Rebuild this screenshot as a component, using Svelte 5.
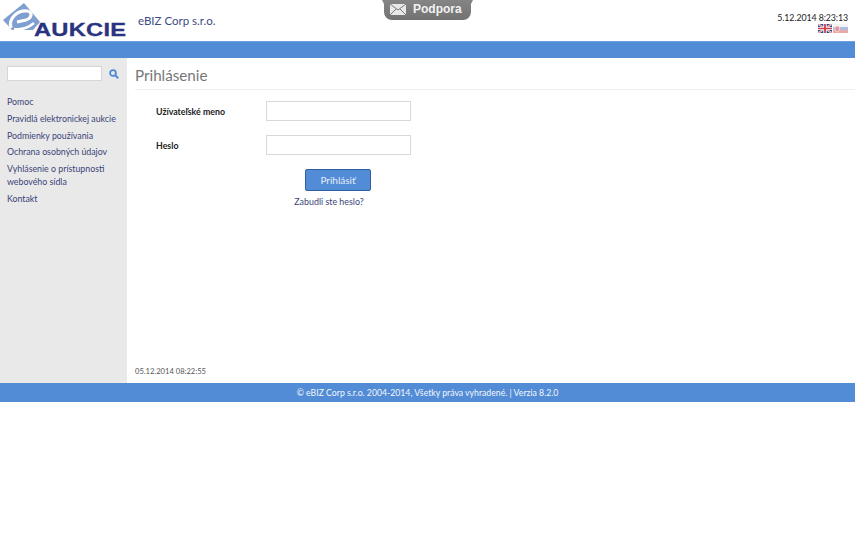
<script>
  const links = [
    'Pomoc',
    'Pravidlá elektronickej aukcie',
    'Podmienky používania',
    'Ochrana osobných údajov',
    'Vyhlásenie o prístupnosti webového sídla',
    'Kontakt'
  ];
</script>

<div class="page">
  <header class="top">
    <div class="logo">
      <svg class="mark" width="48" height="38" viewBox="0 0 48 38">
        <path d="M23 2 L39 21 L32 29 L11 29 L2 19 Z" fill="#7f9fd0" />
        <path d="M10 27 C7 17 17 9 26 10 C32 11 31 17 25 19 L16 21" fill="none" stroke="#fff" stroke-width="3.2" />
        <path d="M13 28 C20 29 27 27 33 22" fill="none" stroke="#fff" stroke-width="2.6" />
      </svg>
      <span class="logotext">AUKCIE</span>
    </div>
    <div class="corp">eBIZ Corp s.r.o.</div>
    <div class="support">
      <svg width="16" height="11" viewBox="0 0 16 11">
        <rect width="16" height="11" fill="#e8e8e8" />
        <path d="M0 0 L8 6 L16 0 M0 11 L6 5 M16 11 L10 5" fill="none" stroke="#7a7a7a" stroke-width="1" />
      </svg>
      <span>Podpora</span>
    </div>
    <div class="meta">
      <div class="clock">5.12.2014 8:23:13</div>
      <div class="flags">
        <svg width="14" height="9" viewBox="0 0 14 10" preserveAspectRatio="none">
          <rect width="14" height="10" fill="#2b4a8c" />
          <path d="M0 0 L14 10 M14 0 L0 10" stroke="#fff" stroke-width="2" />
          <path d="M0 0 L14 10 M14 0 L0 10" stroke="#c8404a" stroke-width="0.7" />
          <path d="M7 0 V10 M0 5 H14" stroke="#fff" stroke-width="3.4" />
          <path d="M7 0 V10 M0 5 H14" stroke="#c8404a" stroke-width="1.8" />
        </svg>
        <svg class="dim" width="15" height="9" viewBox="0 0 15 10" preserveAspectRatio="none">
          <rect width="15" height="3.4" fill="#f2f2f2" />
          <rect y="3.4" width="15" height="3.3" fill="#9db3dc" />
          <rect y="6.7" width="15" height="3.3" fill="#e59a9a" />
          <path d="M2 2.5 H6.5 V6 Q6.5 8 4.2 8.8 Q2 8 2 6 Z" fill="#e08080" stroke="#fff" stroke-width="0.6" />
        </svg>
      </div>
    </div>
  </header>

  <div class="bar"></div>

  <div class="body">
    <aside class="side">
      <div class="search">
        <input class="searchbox" type="text" />
        <svg width="10" height="10" viewBox="0 0 10 10">
          <circle cx="4" cy="4" r="2.9" fill="none" stroke="#4f8ad6" stroke-width="1.8" />
          <path d="M6.2 6.2 L9.2 9.2" stroke="#4f8ad6" stroke-width="2" />
        </svg>
      </div>
      <nav class="nav">
        {#each links as link}
          <a href="#top">{link}</a>
        {/each}
      </nav>
    </aside>

    <main class="main">
      <h1>Prihlásenie</h1>
      <form class="form">
        <div class="row">
          <label for="user">Užívateľské meno</label>
          <input id="user" type="text" />
        </div>
        <div class="row">
          <label for="pass">Heslo</label>
          <input id="pass" type="password" />
        </div>
        <div class="actions">
          <button type="button">Prihlásiť</button>
          <a href="#top">Zabudli ste heslo?</a>
        </div>
      </form>
      <div class="stamp">05.12.2014 08:22:55</div>
    </main>
  </div>

  <footer class="foot">© eBIZ Corp s.r.o. 2004-2014, Všetky práva vyhradené. | Verzia 8.2.0</footer>
</div>

<style>
  :global(body) {
    margin: 0;
    background: #fff;
  }
  .page {
    width: 855px;
    font-family: Lato, "Open Sans", sans-serif;
    font-size: 9px;
    color: #222;
  }
  .top {
    height: 41px;
    display: flex;
    position: relative;
    box-sizing: border-box;
  }
  .logo {
    width: 138px;
    height: 41px;
    position: relative;
    flex: none;
  }
  .mark {
    position: absolute;
    left: 1px;
    top: 1px;
  }
  .logotext {
    position: absolute;
    left: 34px;
    top: 20px;
    font-family: "Liberation Sans", sans-serif;
    font-weight: 700;
    font-size: 18.5px;
    line-height: 20px;
    letter-spacing: 0.2px;
    color: #2a3380;
    transform: scaleX(1.28);
    transform-origin: left;
    -webkit-text-stroke: 0.3px #2a3380;
  }
  .corp {
    font-size: 11.5px;
    color: #3e4a85;
    padding-top: 13px;
    line-height: 15px;
  }
  .support {
    position: absolute;
    left: 384px;
    top: 0;
    width: 87px;
    height: 20px;
    box-sizing: border-box;
    background: linear-gradient(#858585, #727272);
    border-radius: 0 0 8px 8px;
    display: flex;
    align-items: center;
    gap: 7px;
    padding: 0 0 2px 6px;
    color: #f2f2f2;
    font-family: "Liberation Sans", sans-serif;
    font-weight: 700;
    font-size: 12px;
  }
  .support::before,
  .support::after {
    content: "";
    position: absolute;
    top: 0;
    width: 3px;
    height: 6px;
    background: #858585;
  }
  .support::before {
    left: -2px;
    clip-path: polygon(0 0, 100% 0, 100% 100%);
  }
  .support::after {
    right: -2px;
    clip-path: polygon(0 0, 100% 0, 0 100%);
  }
  .meta {
    margin-left: auto;
    padding: 12px 7px 0 0;
    text-align: right;
  }
  .clock {
    font-size: 8.8px;
    line-height: 12px;
    letter-spacing: -0.08px;
    color: #222;
  }
  .flags {
    display: flex;
    justify-content: flex-end;
    gap: 1px;
  }
  .dim {
    opacity: 0.85;
  }
  .bar {
    height: 17px;
    background: #528cd6;
    border-top: 1px solid #6fa0de;
    box-sizing: border-box;
  }
  .body {
    display: flex;
    height: 325px;
  }
  .side {
    width: 127px;
    flex: none;
    background: #e9e9e9;
    box-sizing: border-box;
    padding: 8px 0 0 7px;
  }
  .search {
    display: flex;
    align-items: center;
    gap: 7px;
  }
  .searchbox {
    width: 95px;
    height: 15px;
    box-sizing: border-box;
    border: 1px solid #d6d6d6;
    background: #fff;
    padding: 0;
    margin: 0;
  }
  .nav {
    margin-top: 14px;
    display: flex;
    flex-direction: column;
    gap: 3.8px;
    padding-right: 2px;
  }
  .nav a {
    color: #3a4378;
    text-decoration: none;
    font-size: 8.8px;
    line-height: 13px;
  }
  .main {
    flex: 1;
    padding: 0 0 0 8px;
    position: relative;
  }
  h1 {
    margin: 0;
    font-size: 15.2px;
    font-weight: 400;
    color: #777;
    line-height: 20px;
    padding: 7px 0 4px;
    border-bottom: 1px solid #f0f0f0;
  }
  .form {
    margin-top: 11px;
  }
  .row {
    display: flex;
    align-items: center;
    height: 20px;
    margin-bottom: 14px;
  }
  label {
    width: 110px;
    padding-left: 21px;
    box-sizing: content-box;
    font-weight: 700;
    font-size: 8.8px;
    color: #222;
  }
  .row input {
    width: 145px;
    height: 20px;
    box-sizing: border-box;
    border: 1px solid #d8d8d8;
    background: #fff;
    margin: 0;
    padding: 0;
  }
  .actions {
    width: 276px;
    display: flex;
    flex-direction: column;
    align-items: center;
    padding-left: 130px;
    box-sizing: border-box;
    gap: 5px;
  }
  button {
    width: 66px;
    height: 22px;
    background: #528cd6;
    border: 1px solid #2f5f9f;
    border-radius: 2px;
    color: #e8eef8;
    font-family: inherit;
    font-size: 10px;
    padding: 0;
  }
  .actions a {
    color: #3a4378;
    text-decoration: none;
    font-size: 8.9px;
    line-height: 12px;
    margin-left: -18px;
  }
  .stamp {
    position: absolute;
    left: 8px;
    bottom: 7px;
    font-size: 7.6px;
    line-height: 10px;
    color: #555;
  }
  .foot {
    height: 19px;
    background: #528cd6;
    color: #f4f6fb;
    font-size: 8.7px;
    line-height: 19px;
    text-align: center;
  }
</style>
